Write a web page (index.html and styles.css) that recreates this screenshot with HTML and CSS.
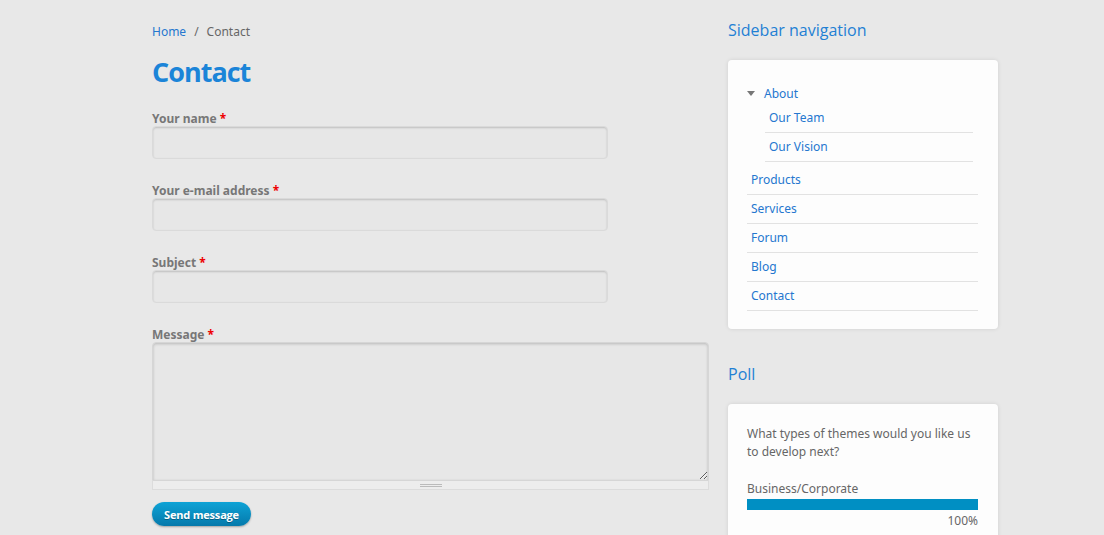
FILE: index.html
```html
<!DOCTYPE html>
<html>
<head>
<meta charset="utf-8">
<title>Contact</title>
<link rel="stylesheet" href="styles.css">
</head>
<body>
<div class="page">
  <main class="main">
    <nav class="breadcrumb"><a href="#">Home</a><span class="sep">/</span><span>Contact</span></nav>
    <h1 class="title">Contact</h1>
    <form class="form">
      <div class="field">
        <label class="label">Your name <span class="req">*</span></label>
        <input class="input" type="text">
      </div>
      <div class="field">
        <label class="label">Your e-mail address <span class="req">*</span></label>
        <input class="input" type="text">
      </div>
      <div class="field">
        <label class="label">Subject <span class="req">*</span></label>
        <input class="input" type="text">
      </div>
      <div class="field field-msg">
        <label class="label">Message <span class="req">*</span></label>
        <div class="textwrap">
          <textarea class="textarea"></textarea>
          <div class="grippie"><span class="grip"></span></div>
        </div>
      </div>
      <button class="btn" type="button">Send message</button>
    </form>
  </main>
  <aside class="sidebar">
    <section class="block">
      <h2 class="block-title">Sidebar navigation</h2>
      <div class="box nav-box">
        <ul class="menu">
          <li class="expanded">
            <a href="#" class="item-top"><span class="tri"></span>About</a>
            <ul class="submenu">
              <li><a href="#">Our Team</a></li>
              <li><a href="#">Our Vision</a></li>
            </ul>
          </li>
          <li class="leaf"><a href="#">Products</a></li>
          <li class="leaf"><a href="#">Services</a></li>
          <li class="leaf"><a href="#">Forum</a></li>
          <li class="leaf"><a href="#">Blog</a></li>
          <li class="leaf"><a href="#">Contact</a></li>
        </ul>
      </div>
    </section>
    <section class="block">
      <h2 class="block-title">Poll</h2>
      <div class="box poll">
        <p class="question">What types of themes would you like us to develop next?</p>
        <div class="choice">
          <div class="choice-text">Business/Corporate</div>
          <div class="bar"><div class="fill" style="width:100%"></div></div>
          <div class="percent">100%</div>
        </div>
      </div>
    </section>
  </aside>
</div>
</body>
</html>
```
FILE: styles.css
```css
html, body {
  margin: 0;
  padding: 0;
  background: #e8e8e8;
  overflow: hidden;
}
body {
  font-family: "Noto Sans", "DejaVu Sans", sans-serif;
  font-size: 12px;
  color: #666;
}
a { color: #2577cf; text-decoration: none; }
.page {
  display: flex;
  gap: 19px;
  padding-left: 152px;
  padding-top: 21px;
}
.main { width: 557px; }
.breadcrumb {
  margin-top: 2px;
  font-size: 12px;
  line-height: 18px;
  color: #666;
}
.breadcrumb .sep { margin: 0 8px; }
.title {
  margin: 13px 0 0;
  font-family: "Open Sans", sans-serif;
  font-weight: 700;
  font-size: 27px;
  line-height: 36px;
  color: #1b84d8;
  letter-spacing: -1px;
}
.form { margin-top: 18px; }
.field { margin-bottom: 21px; }
.field-msg { margin-bottom: 12px; }
.label {
  display: block;
  font-weight: bold;
  color: #777;
  line-height: 14px;
  padding-top: 4px;
  margin: 0;
}
.req { color: #e00; }
.input {
  display: block;
  box-sizing: border-box;
  width: 456px;
  height: 33px;
  margin: 0;
  border: 1px solid #dadada;
  border-radius: 4px;
  background: #e7e7e7;
  box-shadow: inset 0 1px 2px rgba(0,0,0,0.18);
}
.textwrap { width: 557px; }
.textarea {
  display: block;
  box-sizing: border-box;
  width: 557px;
  height: 139px;
  margin: 0;
  border: 1px solid #d6d6d6;
  border-radius: 4px 4px 0 0;
  background: #e7e7e7;
  box-shadow: inset 0 1px 3px rgba(0,0,0,0.2);
  resize: vertical;
}
.grippie {
  box-sizing: border-box;
  height: 9px;
  border: 1px solid #dcdcdc;
  border-top: none;
  background: #ededed;
  display: flex;
  justify-content: center;
  align-items: center;
}
.grip {
  width: 22px;
  height: 3px;
  border-top: 1px solid #bbb;
  border-bottom: 1px solid #bbb;
  box-sizing: border-box;
}
.btn {
  display: block;
  width: 99px;
  height: 24px;
  border: none;
  border-radius: 12px;
  background: linear-gradient(#0ea3d6, #0579ab);
  color: #fff;
  font-family: "Open Sans", sans-serif;
  font-weight: bold;
  font-size: 11px;
  letter-spacing: -0.2px;
  padding: 0;
  box-shadow: 0 1px 2px rgba(0,0,0,0.3);
  text-shadow: 0 1px 0 rgba(0,0,0,0.3);
}
.sidebar { width: 270px; }
.block { margin-bottom: 36px; }
.block-title {
  margin: 0;
  font-family: "Open Sans", sans-serif;
  font-weight: normal;
  font-size: 16px;
  line-height: 18px;
  color: #1f80d4;
}
.box {
  margin-top: 21px;
  background: #fdfdfd;
  border-radius: 4px;
  box-shadow: 0 0 4px rgba(0,0,0,0.1);
  padding: 25px 20px 18px 19px;
}
.menu, .submenu { list-style: none; margin: 0; padding: 0; }
.menu > li > a.item-top {
  display: flex;
  align-items: center;
  line-height: 18px;
}
.tri {
  width: 0; height: 0;
  border-left: 4px solid transparent;
  border-right: 4px solid transparent;
  border-top: 5px solid #777;
  margin-right: 9px;
  margin-top: -1px;
}
.submenu { margin: 1px 5px 0 18px; }
.submenu li a {
  display: block;
  line-height: 28px;
  padding-left: 4px;
  border-bottom: 1px solid #e2e2e2;
}
.leaf a {
  display: block;
  line-height: 28px;
  padding-left: 4px;
  border-bottom: 1px solid #e2e2e2;
}
.expanded { margin-bottom: 4px; }
.poll { padding-top: 21px; }
.question { margin: 0; line-height: 18px; }
.choice { margin-top: 19px; }
.choice-text { line-height: 18px; }
.bar { height: 11px; margin-top: 1px; }
.fill { height: 100%; background: #008fc3; }
.percent { text-align: right; line-height: 18px; margin-top: 2px; }
```
